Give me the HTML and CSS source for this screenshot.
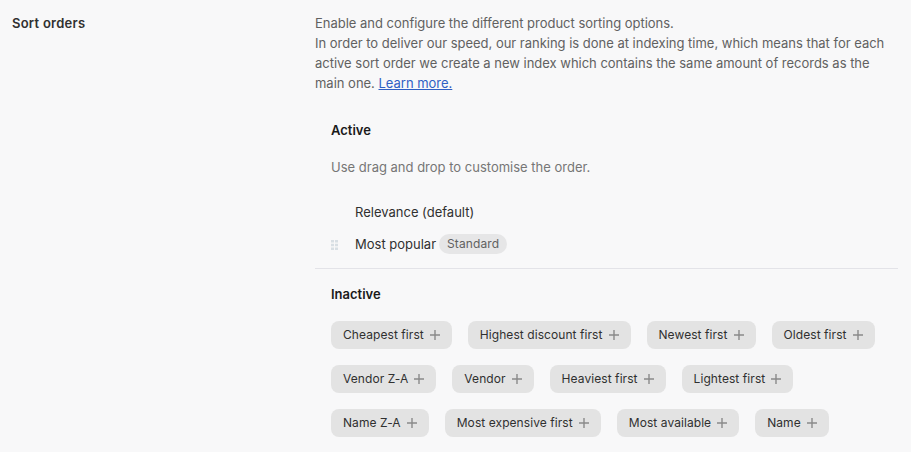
FILE: index.html
```html
<!DOCTYPE html>
<html lang="en">
<head>
    <meta charset="UTF-8">
    <meta name="viewport" content="width=device-width, initial-scale=1.0">
    <title>Sort orders</title>
    <link rel="stylesheet" href="styles.css">
</head>
<body>
    <div class="section">
        <h2 class="section-title">Sort orders</h2>
        <div class="section-body">
            <p class="intro">
                Enable and configure the different product sorting options.<br>
                In order to deliver our speed, our ranking is done at indexing time, which means that for each active sort order we create a new index which contains the same amount of records as the main one. <a href="#">Learn more.</a>
            </p>

            <div class="group">
                <h3 class="group-title">Active</h3>
                <p class="help">Use drag and drop to customise the order.</p>
                <ul class="sort-list">
                    <li class="sort-row">Relevance (default)</li>
                    <li class="sort-row">
                        <svg class="handle" width="7" height="10" viewBox="0 0 7 10">
                            <rect x="0" y="0" width="3" height="2.5"/>
                            <rect x="4" y="0" width="3" height="2.5"/>
                            <rect x="0" y="3.75" width="3" height="2.5"/>
                            <rect x="4" y="3.75" width="3" height="2.5"/>
                            <rect x="0" y="7.5" width="3" height="2.5"/>
                            <rect x="4" y="7.5" width="3" height="2.5"/>
                        </svg>
                        Most popular <span class="badge">Standard</span>
                    </li>
                </ul>
            </div>

            <div class="group inactive">
                <h3 class="group-title">Inactive</h3>
                <div class="chips">
                    <button class="chip">Cheapest first <svg class="plus" width="10" height="10" viewBox="0 0 10 10"><path d="M5 0v10M0 5h10"/></svg></button>
                    <button class="chip">Highest discount first <svg class="plus" width="10" height="10" viewBox="0 0 10 10"><path d="M5 0v10M0 5h10"/></svg></button>
                    <button class="chip">Newest first <svg class="plus" width="10" height="10" viewBox="0 0 10 10"><path d="M5 0v10M0 5h10"/></svg></button>
                    <button class="chip">Oldest first <svg class="plus" width="10" height="10" viewBox="0 0 10 10"><path d="M5 0v10M0 5h10"/></svg></button>
                    <button class="chip">Vendor Z-A <svg class="plus" width="10" height="10" viewBox="0 0 10 10"><path d="M5 0v10M0 5h10"/></svg></button>
                    <button class="chip">Vendor <svg class="plus" width="10" height="10" viewBox="0 0 10 10"><path d="M5 0v10M0 5h10"/></svg></button>
                    <button class="chip">Heaviest first <svg class="plus" width="10" height="10" viewBox="0 0 10 10"><path d="M5 0v10M0 5h10"/></svg></button>
                    <button class="chip">Lightest first <svg class="plus" width="10" height="10" viewBox="0 0 10 10"><path d="M5 0v10M0 5h10"/></svg></button>
                    <button class="chip">Name Z-A <svg class="plus" width="10" height="10" viewBox="0 0 10 10"><path d="M5 0v10M0 5h10"/></svg></button>
                    <button class="chip">Most expensive first <svg class="plus" width="10" height="10" viewBox="0 0 10 10"><path d="M5 0v10M0 5h10"/></svg></button>
                    <button class="chip">Most available <svg class="plus" width="10" height="10" viewBox="0 0 10 10"><path d="M5 0v10M0 5h10"/></svg></button>
                    <button class="chip">Name <svg class="plus" width="10" height="10" viewBox="0 0 10 10"><path d="M5 0v10M0 5h10"/></svg></button>
                </div>
            </div>
        </div>
    </div>
</body>
</html>
```

FILE: styles.css
```css
html, body {
    height: 100%;
    overflow: hidden;
}
body {
    font-family: Inter, "Liberation Sans", sans-serif;
    font-size: 13px;
    line-height: 20px;
    background-color: #f8f8f9;
    color: #303030;
    margin: 0;
    padding: 0;
}
.section {
    display: flex;
    padding: 13px 13px 0 12px;
}
.section-title {
    width: 303px;
    flex-shrink: 0;
    margin: 0;
    font-size: 13px;
    font-weight: 600;
    letter-spacing: 0.25px;
    color: #303030;
}
.section-body {
    flex: 1;
}
.intro {
    margin: 0;
    color: #616161;
    letter-spacing: -0.015px;
}
.intro a {
    color: #2f5fc4;
}
.group {
    padding: 27px 16px 0;
}
.group-title {
    margin: 0;
    font-size: 13px;
    font-weight: 600;
    color: #1a1a1a;
}
.help {
    margin: 17px 0 0;
    color: #767676;
}
.sort-list {
    list-style: none;
    margin: 19px 0 0;
    padding: 0;
}
.sort-row {
    position: relative;
    display: flex;
    align-items: center;
    gap: 3px;
    height: 32px;
    padding-left: 24px;
    color: #303030;
}
.handle {
    position: absolute;
    left: 0;
    top: 12px;
    fill: #d8dfe4;
}
.badge {
    display: inline-block;
    height: 20px;
    padding: 0 8px;
    border-radius: 10px;
    background-color: #e6e6e7;
    color: #616161;
    font-size: 12px;
    letter-spacing: 0.1px;
}
.inactive {
    margin-top: 8px;
    padding-top: 15px;
    border-top: 1px solid #e3e3e8;
}
.chips {
    display: flex;
    flex-wrap: wrap;
    gap: 16px;
    margin-top: 17px;
}
.chip {
    display: flex;
    align-items: center;
    gap: 6px;
    height: 28px;
    padding: 0 12px 2px;
    border: none;
    border-radius: 8px;
    background-color: #e3e3e3;
    color: #303030;
    font-family: inherit;
    font-size: 12px;
    letter-spacing: 0.07px;
    cursor: pointer;
}
.plus {
    margin-top: 2px;
    stroke: #8a8a8a;
    stroke-width: 1.4;
    fill: none;
}
```
